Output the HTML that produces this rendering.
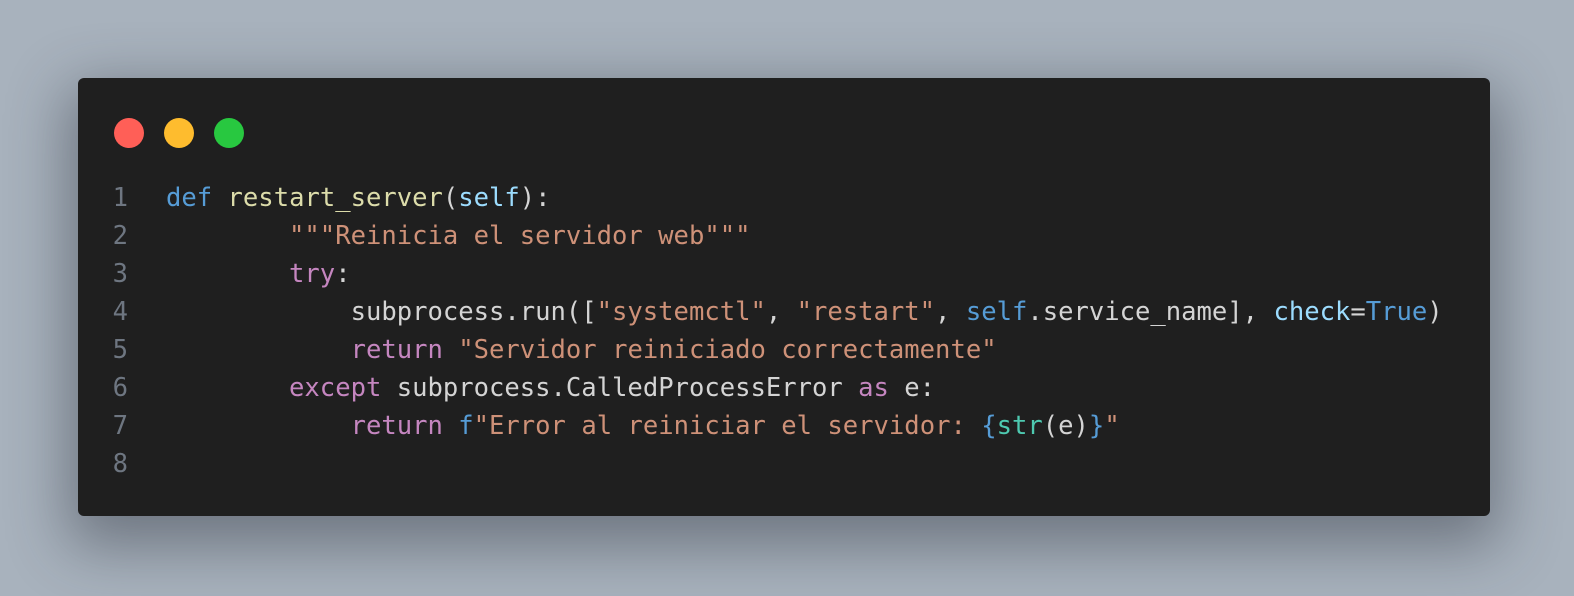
<!DOCTYPE html>
<html><head><meta charset="utf-8"><style>
html,body{margin:0;padding:0}
body{width:1574px;height:596px;background:#a8b2bd;position:relative;overflow:hidden}
.win{position:absolute;left:78px;top:78px;width:1412px;height:438px;background:#1f1f1f;border-radius:6px;box-shadow:0 20px 60px 10px rgba(40,45,55,0.45)}
.dot{position:absolute;top:40px;width:30px;height:30px;border-radius:50%}
.code{position:absolute;left:0;top:101px;font-family:"DejaVu Sans Mono","Liberation Mono",monospace;font-size:25.56px;line-height:38px;color:#d4d4d4;white-space:pre}
.ln{display:inline-block;width:50px;text-align:right;color:#6e7681;margin-right:38px}
.k{color:#569cd6}.f{color:#dcdcaa}.p{color:#9cdcfe}.s{color:#ce9178}.c{color:#c586c0}.t{color:#4ec9b0}
</style></head><body>
<div class="win">
<div class="dot" style="left:36px;background:#ff5f57"></div>
<div class="dot" style="left:86px;background:#febc2e"></div>
<div class="dot" style="left:136px;background:#28c840"></div>
<div class="code"><span class="ln">1</span><span class="k">def</span> <span class="f">restart_server</span>(<span class="p">self</span>):
<span class="ln">2</span>        <span class="s">"""Reinicia el servidor web"""</span>
<span class="ln">3</span>        <span class="c">try</span>:
<span class="ln">4</span>            subprocess.run([<span class="s">"systemctl"</span>, <span class="s">"restart"</span>, <span class="k">self</span>.service_name], <span class="p">check</span>=<span class="k">True</span>)
<span class="ln">5</span>            <span class="c">return</span> <span class="s">"Servidor reiniciado correctamente"</span>
<span class="ln">6</span>        <span class="c">except</span> subprocess.CalledProcessError <span class="c">as</span> e:
<span class="ln">7</span>            <span class="c">return</span> <span class="k">f</span><span class="s">"Error al reiniciar el servidor: </span><span class="k">{</span><span class="t">str</span>(e)<span class="k">}</span><span class="s">"</span>
<span class="ln">8</span>
</div>
</div>
</body></html>
